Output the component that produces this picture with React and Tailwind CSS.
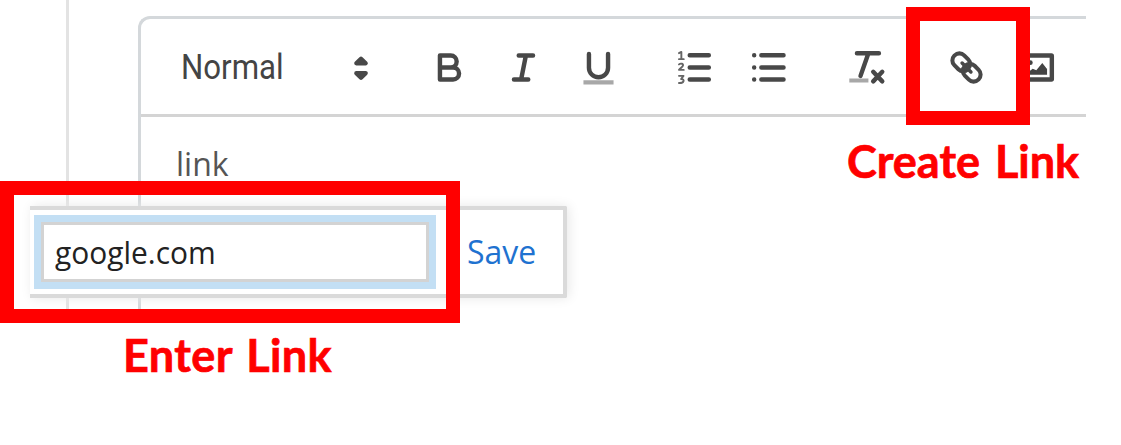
function Icon({ children, size = "h-[43px] w-[43px]" }) {
  return (
    <span className="flex h-11 w-11 shrink-0 items-center justify-center">
      <svg viewBox="0 0 18 18" className={`${size} shrink-0 overflow-visible`} fill="none" stroke="#484848" strokeWidth="1.85" strokeLinecap="round" strokeLinejoin="round">
        {children}
      </svg>
    </span>
  );
}

function Toolbar() {
  return (
    <div className="flex h-[98px] items-center border-b-3 border-[#d4d4d4] pt-0.5 pl-10">
      <div className="flex w-[158px] items-center">
        <span className="w-[103px] origin-left scale-x-[0.905] whitespace-nowrap font-['Roboto',sans-serif] text-[34.5px] leading-none text-[#444]">Normal</span>
      </div>
      <div className="flex w-[88px]">
        <Icon size="h-[42px] w-[42px]">
          <path fill="#484848" d="M7 11.2 9 13.2l2-2zM7 7 9 5l2 2z" />
        </Icon>
      </div>
      <div className="flex gap-[30.5px]">
        <Icon>
          <path d="M5 4h4.5a2.5 2.5 0 0 1 0 5H5zM5 9h5.5a2.5 2.5 0 0 1 0 5H5z" />
        </Icon>
        <Icon>
          <path d="M7 4h6M5 14h6M8 14l2-10" />
        </Icon>
        <Icon>
          <path d="M5 3.3v5.8a4 4 0 0 0 8 0V3.3" />
          <path stroke="none" fill="#a8a8a8" d="M2.7 14.3h12.6v1.8H2.7z" />
        </Icon>
      </div>
      <div className="ml-[52px] flex gap-[30.5px]">
        <Icon>
          <path d="M7 3.9h8M7 9h8M7 14h8" />
          <path stroke="#666" strokeWidth="0.8" d="M2.5 5.5h2M3.5 5.5v-3l-1 .5M2.5 7.7c.7-.6 1.9-.3 1.7.4-.1.6-1 1.1-1.7 1.9h2M2.5 12.5h1.9l-1 1.3c1.7 0 1.3 1.8-.9 1.7" />
        </Icon>
        <Icon>
          <path d="M6 3.9h9.3M6 9h9.3M6 14h9.3M3 3.9h.01M3 9h.01M3 14h.01" />
        </Icon>
      </div>
      <div className="ml-[54px] flex">
        <Icon>
          <path d="M5 3h9.2M9.8 3 6.5 12.5" />
          <path stroke="none" fill="#a8a8a8" d="M1.8 13.6h8v1.7h-8z" />
          <path d="m11.8 10.8 3.8 4m0-4-3.8 4" />
        </Icon>
      </div>
      <div className="ml-[56px] flex gap-[27px]">
        <Icon>
          <g transform="rotate(45 9 9)" strokeWidth="1.7">
            <rect x="1.9" y="6.1" width="8" height="5.8" rx="2.8" />
            <rect x="8.1" y="6.1" width="8" height="5.8" rx="2.8" />
            <path d="M6.4 9h5.2" strokeWidth="1.5" />
          </g>
        </Icon>
        <Icon>
          <rect x="3" y="4" width="12" height="10" rx="0.2" />
          <circle cx="6" cy="7" r="1" fill="#444" stroke="none" />
          <path fill="#444" stroke="none" d="M5 12v-1l2-1.5 1.5.6 2.5-3 2 2.5V12z" />
        </Icon>
      </div>
    </div>
  );
}

function LinkTooltip() {
  return (
    <div className="absolute top-[206px] left-[30px] flex h-[92px] w-[537px] items-center rounded-r-xs border-y-4 border-r-4 border-[#dadada] bg-white shadow-[2px_0_12px_#e8e8e8]">
      <div className="ml-1 h-[74px] w-[402px] bg-[#c3dff4] p-[7px]">
        <div className="flex h-full items-center border-3 border-[#d3d3d3] bg-white pl-[11px]">
          <span className="origin-left scale-x-[0.965] font-['Open_Sans',sans-serif] text-[31px] leading-none text-[#222]">google.com</span>
        </div>
      </div>
      <span className="ml-[31px] font-['Open_Sans',sans-serif] text-[32px] leading-none text-[#1f72d0]">Save</span>
    </div>
  );
}

export default function App() {
  return (
    <div className="relative flex h-[445px] w-[1121px] overflow-hidden bg-white">
      <div className="h-[316px] w-[69px] shrink-0 border-r-3 border-[#e3e3e3]" />
      <div className="ml-[69px] mt-4 h-[300px] w-[948px] overflow-hidden rounded-tl-xl border-t-3 border-l-3 border-[#d4d8db]">
        <Toolbar />
        <p className="mt-[31px] ml-[35px] font-['Open_Sans',sans-serif] text-[32px] leading-[32px] text-[#555]">link</p>
      </div>
      <LinkTooltip />
      <div className="absolute top-[181px] left-0 h-[142px] w-[460px] border-14 border-[#f00]" />
      <div className="absolute top-[7px] left-[906px] h-[118px] w-[124px] border-14 border-[#f00]" />
      <span className="absolute top-[137px] left-[847px] [-webkit-text-stroke:0.7px_#f00] [word-spacing:4px] whitespace-nowrap font-['Lato',sans-serif] text-[45px] leading-[48px] font-bold text-[#f00]">Create Link</span>
      <span className="absolute top-[331px] left-[123px] [-webkit-text-stroke:0.7px_#f00] tracking-[0.4px] [word-spacing:3px] whitespace-nowrap font-['Lato',sans-serif] text-[45px] leading-[48px] font-bold text-[#f00]">Enter Link</span>
    </div>
  );
}
